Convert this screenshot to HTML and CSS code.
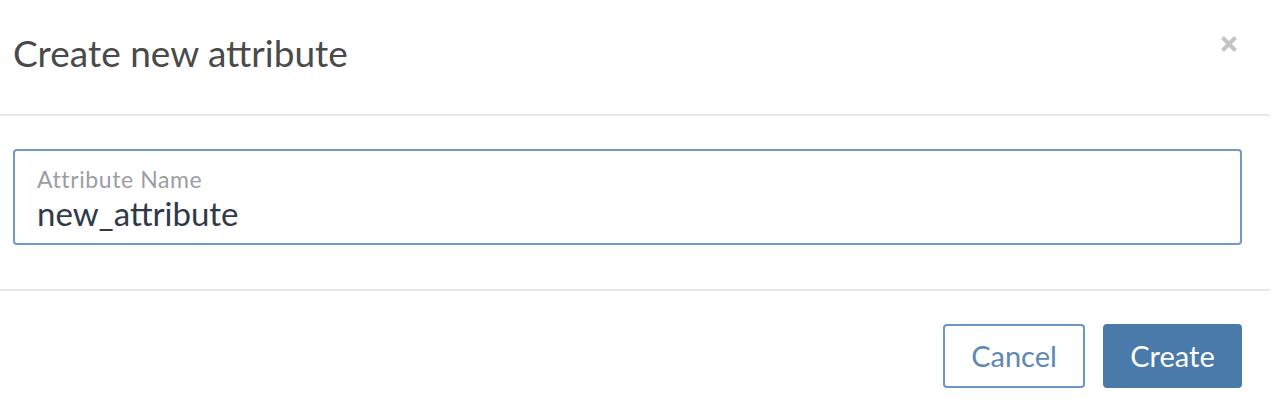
FILE: index.html
```html
<!DOCTYPE html>
<html>
<head>
<meta charset="utf-8">
<link rel="stylesheet" href="styles.css">
</head>
<body>
<div class="modal">
  <div class="modal-header">
    <h1 class="modal-title">Create new attribute</h1>
    <button class="close" aria-label="Close">
      <svg width="18" height="18" viewBox="0 0 18 18"><path d="M2.5 2.5 L15.5 15.5 M15.5 2.5 L2.5 15.5" stroke="#c4c4c4" stroke-width="4" stroke-linecap="butt"/></svg>
    </button>
  </div>
  <div class="modal-body">
    <div class="field">
      <label class="field-label">Attribute Name</label>
      <div class="field-value">new_attribute</div>
    </div>
  </div>
  <div class="modal-footer">
    <button class="btn btn-outline">Cancel</button>
    <button class="btn btn-primary">Create</button>
  </div>
</div>
</body>
</html>
```
FILE: styles.css
```css
html, body {
  margin: 0;
  padding: 0;
  background: #ffffff;
}
body {
  font-family: Lato, "Open Sans", sans-serif;
}
.modal {
  width: 1270px;
}
.modal-header {
  height: 116px;
  display: flex;
  align-items: center;
  justify-content: space-between;
  padding: 0 32px 0 13px;
  box-sizing: border-box;
  border-bottom: 2px solid #e8e8e8;
}
.modal-title {
  margin: 0;
  font-size: 37px;
  line-height: 44px;
  font-weight: 400;
  color: #4a4a4a;
  padding-bottom: 8px;
}
.close {
  border: 0;
  background: none;
  padding: 0;
  width: 18px;
  height: 18px;
  margin-top: -26px;
}
.close svg { display: block; }
.modal-body {
  padding: 33px 28px 44px 13px;
  border-bottom: 2px solid #e8e8e8;
}
.field {
  height: 96px;
  box-sizing: border-box;
  border: 2px solid #7199c4;
  border-radius: 4px;
  padding: 14px 22px 0;
}
.field-label {
  display: block;
  font-size: 23px;
  line-height: 28px;
  letter-spacing: 0.6px;
  color: #9a9ea4;
}
.field-value {
  font-size: 33px;
  line-height: 40px;
  color: #2f3947;
}
.modal-footer {
  display: flex;
  justify-content: flex-end;
  gap: 18px;
  padding: 33px 28px 0 13px;
}
.btn {
  font-family: inherit;
  font-size: 29px;
  height: 64px;
  border-radius: 4px;
  box-sizing: border-box;
  cursor: pointer;
  padding: 0 0 2px;
}
.btn-outline {
  width: 142px;
  background: #ffffff;
  border: 2px solid #6b95c2;
  color: #5d88b6;
}
.btn-primary {
  width: 139px;
  background: #4a7aaa;
  border: 2px solid #4a7aaa;
  color: #ffffff;
}
```
